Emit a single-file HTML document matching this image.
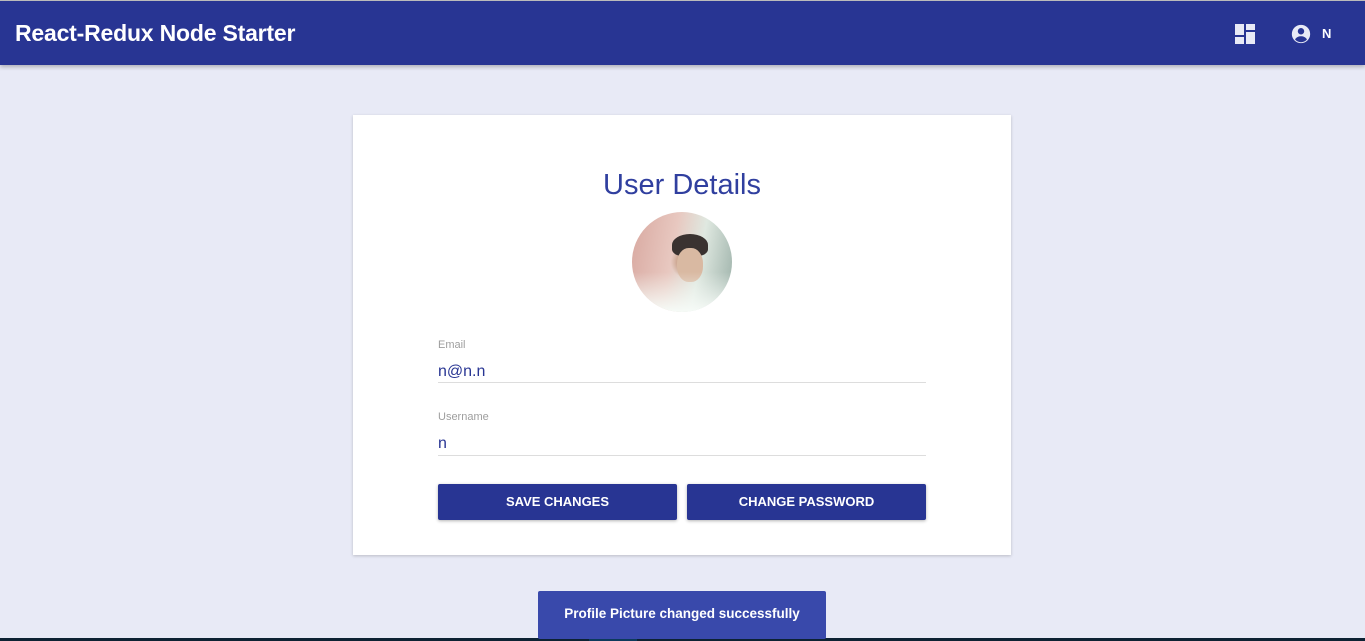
<!DOCTYPE html>
<html><head><meta charset="utf-8"><style>
*{box-sizing:border-box;margin:0;padding:0}
body{width:1365px;height:641px;overflow:hidden;background:#e8eaf6;font-family:"Liberation Sans",Arial,sans-serif;position:relative}
.bar{position:absolute;left:0;top:0;width:1365px;height:65px;background:#283593;box-shadow:0 2px 4px rgba(0,0,0,.25);border-top:1px solid #bbb}
.bar h1{position:absolute;left:15px;top:19px;color:#fff;font-size:23px;font-weight:bold;letter-spacing:-0.2px}
.card{position:absolute;left:353px;top:115px;width:658px;height:440px;background:#fff;box-shadow:0 1px 3px rgba(0,0,0,.2)}
.title{position:absolute;left:0;width:100%;top:54px;text-align:center;color:#303f9f;font-size:29px}
.av{position:absolute;left:279px;top:97px;width:100px;height:100px;border-radius:50%;overflow:hidden;
background:radial-gradient(circle at 55% 50%,#c9a089 0 12%,transparent 22%),linear-gradient(100deg,#d8a8a0 0%,#e8c8c0 40%,#dfe8e0 65%,#9bb0a8 100%)}
.av .h{position:absolute;left:40px;top:22px;width:36px;height:22px;border-radius:50% 50% 30% 30%;background:#3a3230}
.av .f{position:absolute;left:45px;top:36px;width:26px;height:34px;border-radius:45%;background:#d9b9a2}
.av .g{position:absolute;left:0;top:60px;width:100px;height:40px;background:linear-gradient(#fff0,#f6fbf7)}
.lbl{position:absolute;left:85px;color:#9e9e9e;font-size:11px}
.val{position:absolute;left:85px;color:#283593;font-size:16px}
.line{position:absolute;left:85px;width:488px;height:1px;background:#ddd}
.btn{position:absolute;top:369px;width:239px;height:36px;background:#283593;color:#fff;font-size:13px;font-weight:bold;text-align:center;line-height:36px;border-radius:2px;box-shadow:0 1px 3px rgba(0,0,0,.3)}
.snack{position:absolute;left:538px;top:591px;width:288px;height:48px;background:#3949ab;color:#fff;font-size:13.5px;font-weight:bold;text-align:center;line-height:46px;border-radius:2px}
</style></head><body>
<div class="bar"><h1>React-Redux Node Starter</h1>
<svg style="position:absolute;left:1235px;top:23px" width="20" height="20" viewBox="0 0 20 20" fill="#e8eaf6"><rect x="0" y="0" width="9" height="11"/><rect x="11" y="0" width="9" height="6"/><rect x="0" y="13" width="9" height="7"/><rect x="11" y="8" width="9" height="12"/></svg>
<svg style="position:absolute;left:1290px;top:22px" width="22" height="22" viewBox="0 0 24 24"><circle cx="12" cy="12" r="10" fill="#e8eaf6"/><circle cx="12" cy="9" r="3.5" fill="#283593"/><path d="M5.5 18c1.5-2.5 4-3.5 6.5-3.5s5 1 6.5 3.5A8.5 8.5 0 0 1 5.5 18z" fill="#283593"/></svg>
<span style="position:absolute;left:1322px;top:25px;color:#fff;font-size:13px;font-weight:bold">N</span>
</div>
<div class="card">
<div class="title">User Details</div>
<div class="av"><div class="h"></div><div class="f"></div><div class="g"></div></div>
<div class="lbl" style="top:224px">Email</div>
<div class="val" style="top:248px">n@n.n</div>
<div class="line" style="top:267px"></div>
<div class="lbl" style="top:296px">Username</div>
<div class="val" style="top:320px">n</div>
<div class="line" style="top:340px"></div>
<div class="btn" style="left:85px">SAVE CHANGES</div>
<div class="btn" style="left:334px">CHANGE PASSWORD</div>
</div>
<div style="position:absolute;left:0;top:638px;width:1365px;height:3px;background:#0d2233"></div>
<div style="position:absolute;left:589px;top:638px;width:48px;height:3px;background:#0d3a5c"></div>
<div class="snack">Profile Picture changed successfully</div>
</body></html>
